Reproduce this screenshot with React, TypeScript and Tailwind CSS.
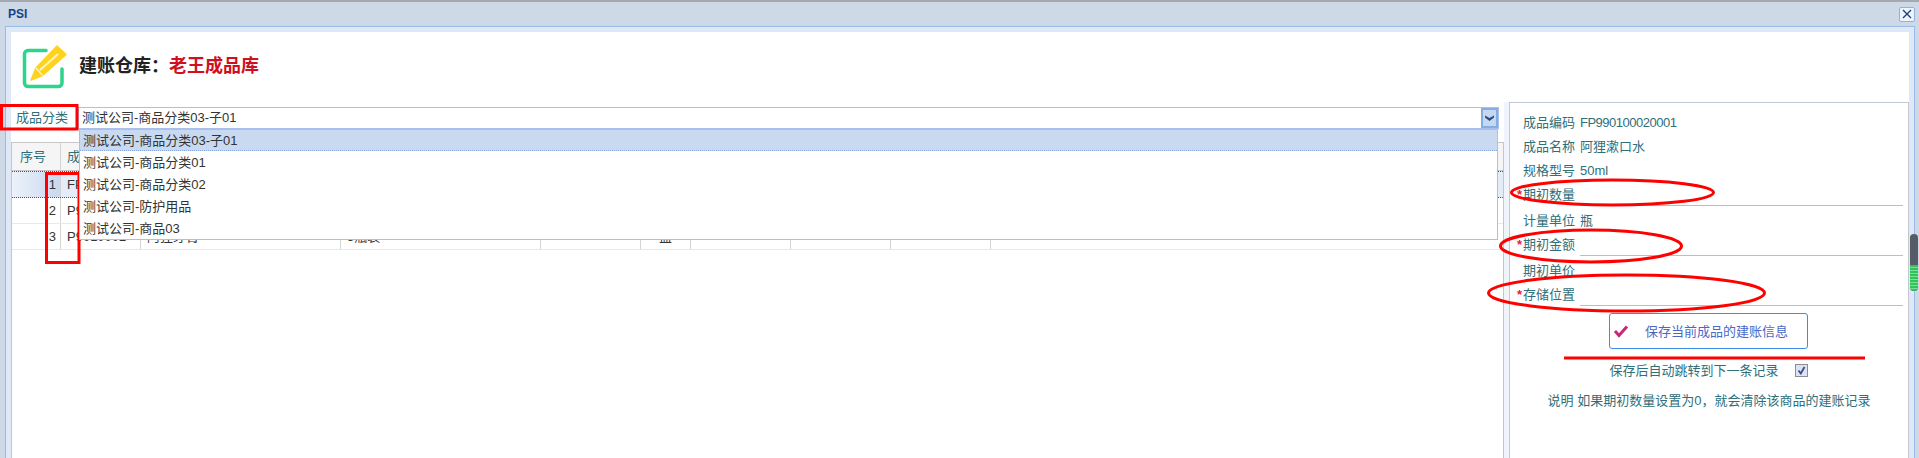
const FONT = "font-['Liberation_Sans','Noto_Sans_CJK_SC',sans-serif]";

const CATEGORIES = [
  "测试公司-商品分类03-子01",
  "测试公司-商品分类01",
  "测试公司-商品分类02",
  "测试公司-防护用品",
  "测试公司-商品03",
];

const ROWS = [
  { no: 1, code: "FP990100020001", name: "阿狸漱口水", spec: "50ml", unit: "瓶" },
  { no: 2, code: "P9010001", name: "阿狸牙刷", spec: "软毛", unit: "支" },
  { no: 3, code: "P9010002", name: "阿狸牙膏", spec: "5瓶装", unit: "盒" },
];

function PencilIcon() {
  return (
    <svg className="shrink-0" width="46" height="46" viewBox="0 0 46 46" fill="none">
      <path
        d="M24 6.5H6a3.5 3.5 0 0 0-3.5 3.5v29a3.5 3.5 0 0 0 3.5 3.5h30.500a3.500 3.500 0 0 0 3.500-3.500V25"
        stroke="#2ed48a"
        strokeWidth="3.5"
        strokeLinecap="round"
      />
      <path d="M35 2L44 10.500L20.500 31.500L9 36L14 24Z" fill="#ffd21f" stroke="#ffd21f" strokeWidth="1.500" strokeLinejoin="round" />
      <path d="M36 10L18 26" stroke="#fff6c4" strokeWidth="2" />
      <path d="M14 24L20.500 31.500" stroke="#fff6c4" strokeWidth="1.200" />
    </svg>
  );
}

function Annotations() {
  return (
    <svg className="absolute inset-0 pointer-events-none" width="1919" height="458" fill="none" stroke="#ff0000">
      <rect x="1.500" y="103.500" width="75.500" height="23.500" strokeWidth="3" />
      <rect x="46.500" y="171.500" width="32.500" height="89" strokeWidth="3" />
      <ellipse cx="1612.500" cy="190.500" rx="101" ry="12.500" strokeWidth="3" />
      <ellipse cx="1591" cy="244" rx="90.500" ry="16" strokeWidth="3" />
      <ellipse cx="1626.500" cy="291" rx="138" ry="18" strokeWidth="3" />
      <path d="M1564 356H1865" strokeWidth="3" />
    </svg>
  );
}

function Field({ label, value, required, input, className, valueClass }: {
  label: string;
  value?: string;
  required?: boolean;
  input?: boolean;
  className?: string;
  valueClass?: string;
}) {
  return (
    <div className={`flex h-[24px] items-center ${className ?? ""}`}>
      <span className="relative w-[57px] shrink-0">
        {required && <span className="absolute left-[-6px] font-bold text-[#e8203a]">*</span>}
        {label}
      </span>
      {input ? (
        <span className="h-[22px] mt-[2px] mr-[5px] flex-1 border-b border-[#a9c0ee]" />
      ) : (
        <span className={valueClass}>{value}</span>
      )}
    </div>
  );
}

function Grid() {
  const cell = "flex items-center border-r border-[#d4d4d4] px-[6px]";
  return (
    <div className="mt-[13px] flex-1 border-l border-r border-t border-[#c6c6c6] text-[#2f6f7a]">
      <div className="flex h-[28px] border-b border-[#c6c6c6] bg-[#f5f5f5]">
        <div className={`${cell} w-[49px] pl-[8px]`}>序号</div>
        <div className={`${cell} w-[80px]`}>成品编码</div>
        <div className={`${cell} w-[200px]`}>成品名称</div>
        <div className={`${cell} w-[200px]`}>规格型号</div>
        <div className={`${cell} w-[100px]`}>期初数量</div>
        <div className={`${cell} w-[50px]`}>单位</div>
        <div className={`${cell} w-[100px]`}>期初金额</div>
        <div className={`${cell} w-[100px]`}>期初单价</div>
        <div className={`${cell} w-[100px]`}>存储位置</div>
      </div>
      <div className="text-[#333333]">
        {ROWS.map((row) => (
          <div
            key={row.no}
            className={
              row.no === 1
                ? "flex h-[27px] border-y border-dotted border-[#555555] bg-[#e4ecf8]"
                : "flex h-[26px] border-b border-[#e9e9e9]"
            }
          >
            <div
              className={`${cell} w-[49px] justify-end !pr-[4px] ${
                row.no === 1 ? "bg-gradient-to-r from-[#edf2fa] to-[#c8d8ef]" : "bg-white"
              }`}
            >
              {row.no}
            </div>
            <div className={`${cell} w-[80px] overflow-hidden whitespace-nowrap`}>{row.code}</div>
            <div className={`${cell} w-[200px]`}>{row.name}</div>
            <div className={`${cell} w-[200px]`}>{row.spec}</div>
            <div className={`${cell} w-[100px]`} />
            <div className={`${cell} w-[50px] justify-center`}>{row.unit}</div>
            <div className={`${cell} w-[100px]`} />
            <div className={`${cell} w-[100px]`} />
            <div className={`${cell} w-[100px]`} />
          </div>
        ))}
      </div>
    </div>
  );
}

function CategoryCombo() {
  return (
    <div className="relative flex h-[22px] flex-1 border border-[#a9c0ee] bg-white text-[#333333]">
      <div className="flex flex-1 items-center pb-[1px] pl-[3px]">{CATEGORIES[0]}</div>
      <div className="flex w-[17px] items-center justify-center border-2 border-[#84aee2] bg-[#c5d8f0]">
        <svg width="9" height="6" viewBox="0 0 9 6" fill="#2b4a86">
          <path d="M0 0.500L4.500 3L9 0.500V2.500L4.500 6L0 2.500Z" />
        </svg>
      </div>
      <div className="absolute left-0 right-0 top-[21px] z-10 border border-[#a9c0ee] bg-white">
        {CATEGORIES.map((name, i) => (
          <div
            key={name}
            className={
              i === 0
                ? "flex h-[21px] items-center border-b border-dotted border-[#8aaae0] bg-[#c9d9f0] pl-[3px]"
                : "flex h-[22px] items-center pl-[3px]"
            }
          >
            {name}
          </div>
        ))}
      </div>
    </div>
  );
}

function DetailPanel() {
  return (
    <div className="w-[400px] border-l border-r border-t border-[#c2c8cf] pt-[7px] text-[#2f6f7a]">
      <div className="pl-[13px]">
        <Field label="成品编码" value="FP990100020001" valueClass="tracking-[-0.5px]" />
        <Field label="成品名称" value="阿狸漱口水" />
        <Field label="规格型号" value="50ml" />
        <Field label="期初数量" required input />
        <Field label="计量单位" value="瓶" className="mt-[2px]" />
        <Field label="期初金额" required input />
        <Field label="期初单价" className="mt-[2px]" />
        <Field label="存储位置" required input />
      </div>
      <div className="flex justify-center pr-[1px]">
        <button
          type="button"
          className="mt-[7px] flex h-[36px] w-[199px] items-center rounded-[3px] border border-[#3b8de8] bg-white pl-[3px] text-[#4a68c8]"
        >
          <svg width="16" height="14" viewBox="0 0 16 14" fill="none">
            <path d="M2 7L6 11.500L14 2.500" stroke="#c9267c" strokeWidth="3" />
          </svg>
          <span className="ml-[16px]">保存当前成品的建账信息</span>
        </button>
      </div>
      <div className="mt-[13px] flex h-[16px] items-center justify-center pr-[1px]">
        <span>保存后自动跳转到下一条记录</span>
        <span className="ml-[16px] flex h-[13px] w-[13px] items-center justify-center border border-[#8d8d8d] bg-[#dce3f2]">
          <svg width="9" height="9" viewBox="0 0 9 9" fill="none">
            <path d="M1.500 4.500L3.800 7.500L7.500 1" stroke="#3f4a8e" strokeWidth="1.800" />
          </svg>
        </span>
      </div>
      <div className="mt-[16px] text-center">说明 如果期初数量设置为0，就会清除该商品的建账记录</div>
    </div>
  );
}

export default function App() {
  return (
    <div className={`relative flex h-[458px] flex-col overflow-hidden border-t-2 border-[#a6a9ad] bg-[#cdd9e7] text-[13px] leading-none ${FONT}`}>
      <div className="flex h-[24px] shrink-0 items-center justify-between pl-[8px] pr-[4px]">
        <span className="text-[12px] font-bold text-[#15428b]">PSI</span>
        <button type="button" className="flex h-[15px] w-[16px] items-center justify-center rounded-[2px] border border-[#8fb2e2] bg-[#eef4fc]">
          <svg width="10" height="10" viewBox="0 0 10 10" stroke="#1c3f76" strokeWidth="1.300">
            <path d="M1 1L9 9M9 1L1 9" />
          </svg>
        </button>
      </div>
      <div className="ml-[5px] mr-[4px] flex flex-1 flex-col border-x border-t border-[#99bbe8] bg-[#dfe8f6] px-[5px] pt-[5px]">
        <div className="flex flex-1 flex-col bg-white">
          <div className="flex h-[70px] shrink-0 items-center pl-[11px] pb-[1px]">
            <PencilIcon />
            <h1 className="ml-[11px] pb-[2px] text-[18px] font-bold text-[#222222]">
              建账仓库：<span className="text-[#d01020]">老王成品库</span>
            </h1>
          </div>
          <div className="flex flex-1">
            <div className="flex flex-1 flex-col pt-[5px]">
              <div className="flex h-[22px] items-center pr-[5px]">
                <span className="w-[67px] shrink-0 pb-[1px] pl-[5px] text-[#2f6f7a]">成品分类</span>
                <CategoryCombo />
              </div>
              <Grid />
            </div>
            <div className="w-[5px] bg-[#f0f4fb]" />
            <DetailPanel />
          </div>
        </div>
      </div>
      <div className="absolute left-[1910px] top-[232px] w-[8px] h-[57px] overflow-hidden rounded-[4px] bg-[#555c66] pt-[31px]">
        <div className="h-[26px] bg-[repeating-linear-gradient(#2fc35a_0_2px,#7fe09a_2px_3px)]" />
      </div>
      <Annotations />
    </div>
  );
}
